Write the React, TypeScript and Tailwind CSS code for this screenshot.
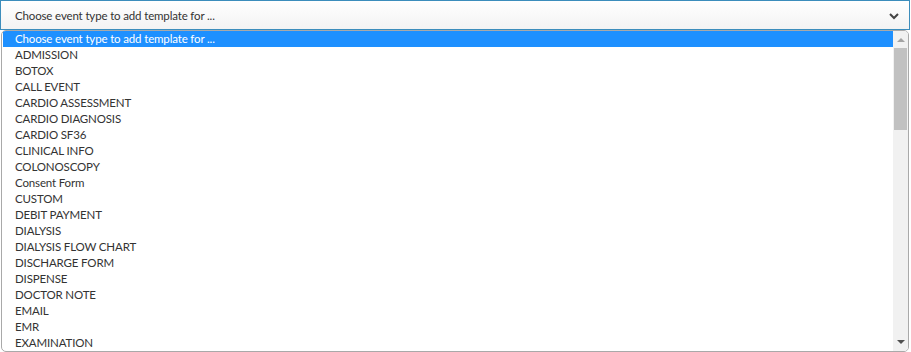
const ITEMS = [
  "ADMISSION",
  "BOTOX",
  "CALL EVENT",
  "CARDIO ASSESSMENT",
  "CARDIO DIAGNOSIS",
  "CARDIO SF36",
  "CLINICAL INFO",
  "COLONOSCOPY",
  "Consent Form",
  "CUSTOM",
  "DEBIT PAYMENT",
  "DIALYSIS",
  "DIALYSIS FLOW CHART",
  "DISCHARGE FORM",
  "DISPENSE",
  "DOCTOR NOTE",
  "EMAIL",
  "EMR",
  "EXAMINATION",
];

export default function App() {
  return (
    <div className="w-[911px] h-[352px] bg-white overflow-hidden font-['Lato',sans-serif] text-[11.5px] tracking-[-0.15px] text-[#333]">
      {/* Closed select */}
      <div className="h-[30px] mr-px border border-[#3c8dbc] bg-gradient-to-b from-white to-[#f3f3f3] flex items-center pt-px pl-[14px] pr-[10px]">
        <span className="flex-1">Choose event type to add template for ...</span>
        <svg width="10" height="8" viewBox="0 0 10 8" className="text-[#444]">
          <path d="M1 2 L5 6 L9 2" fill="none" stroke="currentColor" strokeWidth="2" />
        </svg>
      </div>

      {/* Open list */}
      <div className="ml-px mr-[2px] h-[322px] border border-[#a9a9a9] rounded-[5px] flex overflow-hidden bg-white">
        <div className="flex-1 pl-[1px] overflow-hidden">
          <div className="h-4 leading-4 bg-[#1e90ff] text-white pl-[12px]">
            Choose event type to add template for ...
          </div>
          {ITEMS.map((item) => (
            <div key={item} className="h-4 leading-4 pl-[12px]">
              {item}
            </div>
          ))}
        </div>

        {/* Scrollbar */}
        <div className="w-[15px] bg-[#f1f1f1] flex flex-col items-center">
          <div className="h-[17px] flex items-center justify-center">
            <svg width="8" height="5" viewBox="0 0 8 5">
              <path d="M0 5 L4 1 L8 5 Z" fill="#a3a3a3" />
            </svg>
          </div>
          <div className="w-[13px] h-[82px] bg-[#c1c1c1]" />
          <div className="flex-1" />
          <div className="h-[17px] flex items-center justify-center">
            <svg width="8" height="5" viewBox="0 0 8 5">
              <path d="M0 0 L8 0 L4 4 Z" fill="#505050" />
            </svg>
          </div>
        </div>
      </div>
    </div>
  );
}
